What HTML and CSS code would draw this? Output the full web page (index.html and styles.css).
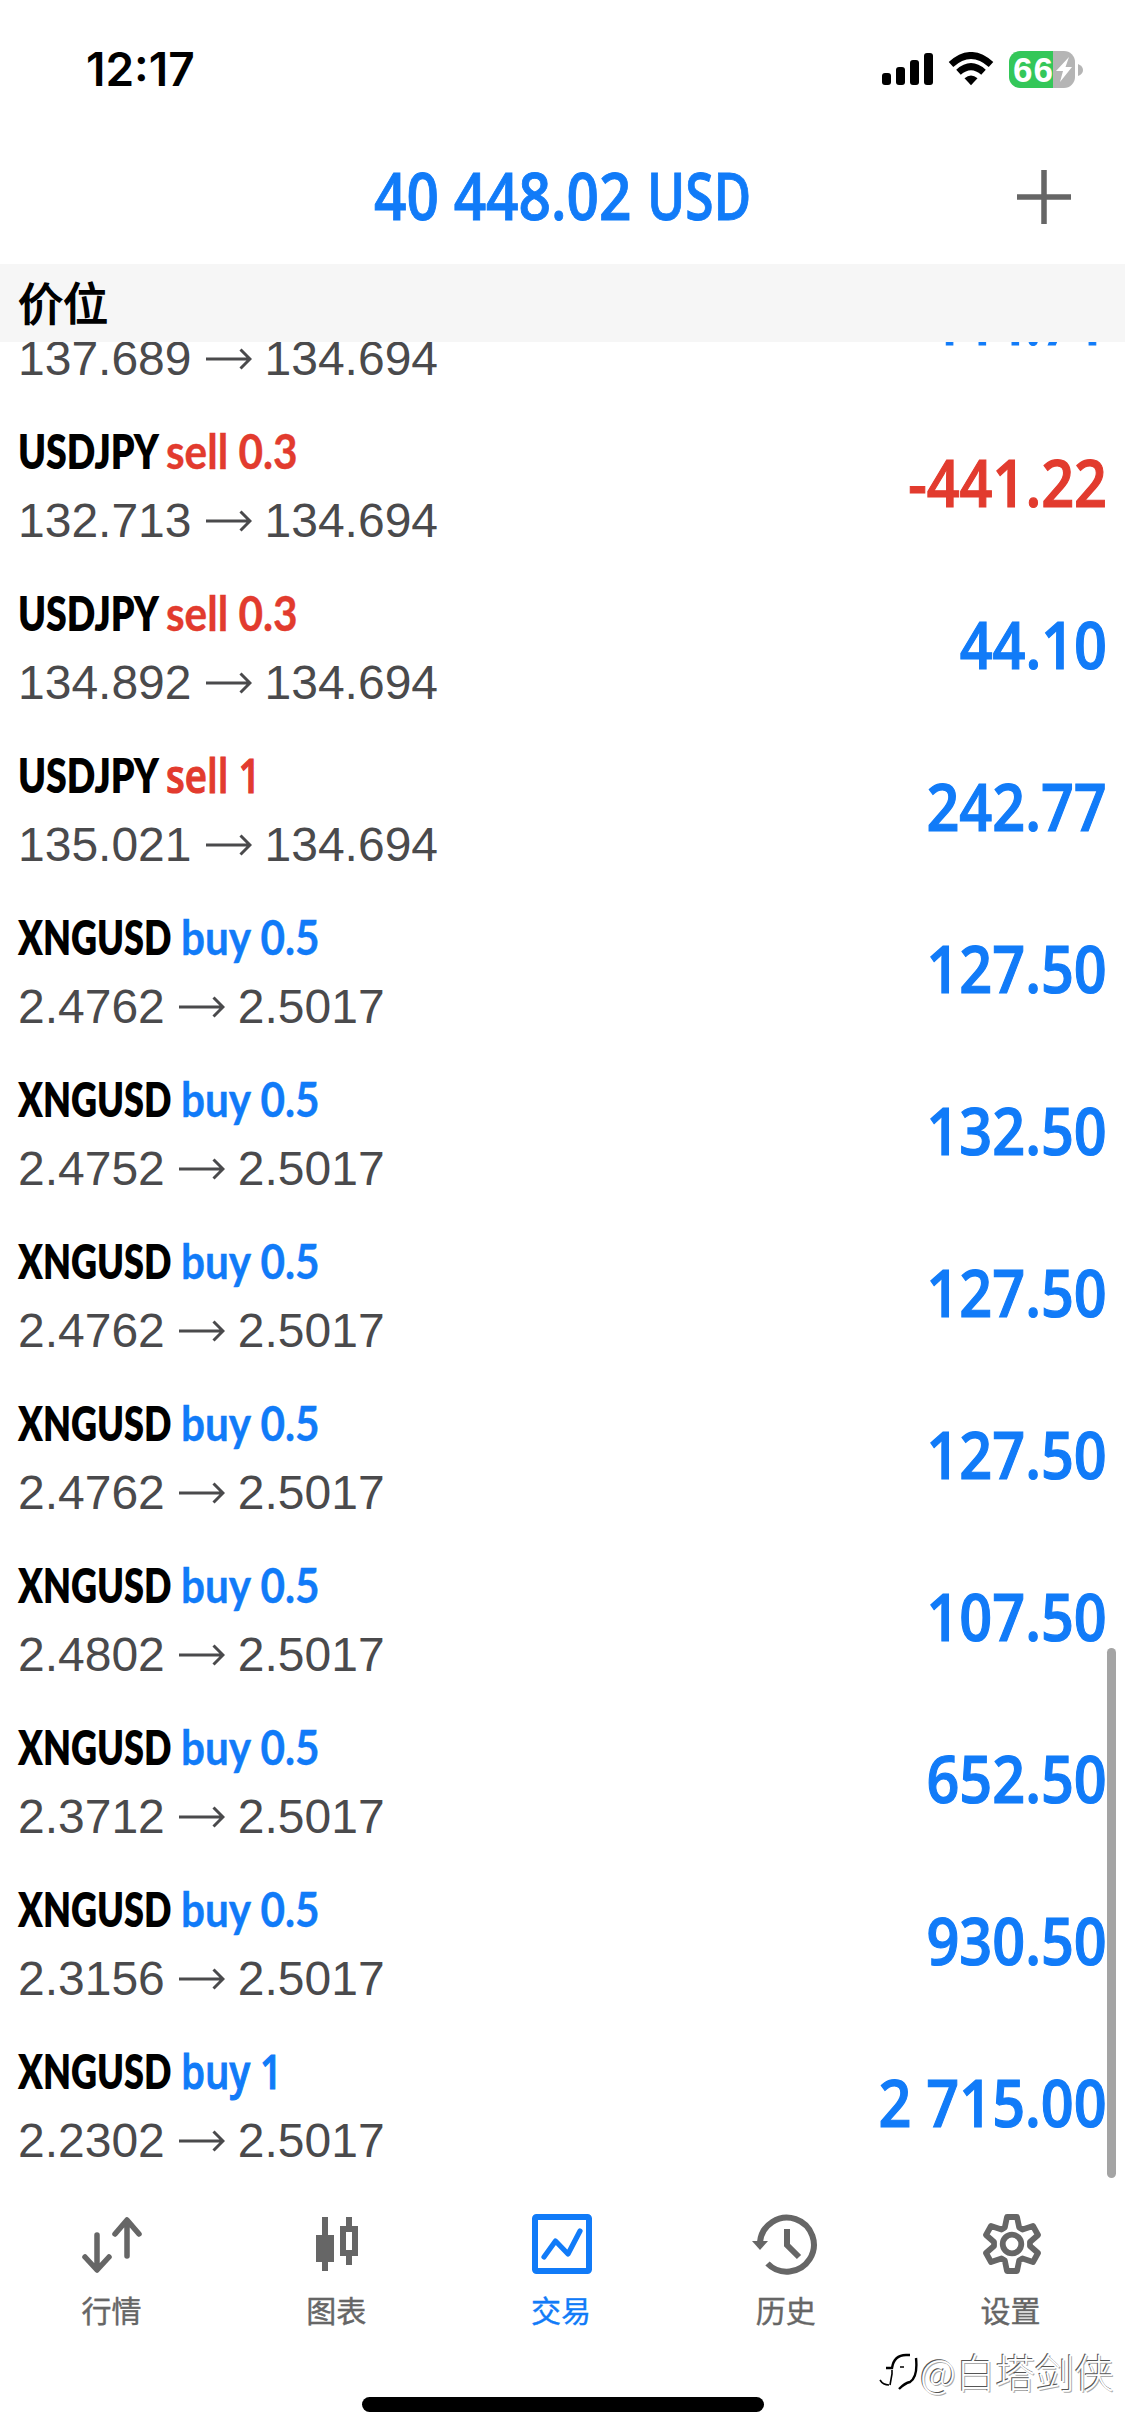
FILE: index.html
```html
<!DOCTYPE html>
<html lang="zh-CN">
<head>
<meta charset="utf-8">
<title>交易</title>
<link rel="stylesheet" href="styles.css">
</head>
<body>
<div class="screen">
  <header class="status">
    <span class="clock">12:17</span>
    <div class="indicators">
      <svg class="signal" width="51" height="34" viewBox="0 0 51 34"><rect x="0" y="21" width="9" height="12" rx="3"/><rect x="14" y="15" width="9" height="18" rx="3"/><rect x="28" y="8" width="9" height="25" rx="3"/><rect x="42" y="1" width="9" height="32" rx="3"/></svg>
      <svg class="wifi" width="46" height="34" viewBox="0 0 46 34" fill="none" stroke="#000" stroke-width="6.8"><path d="M3 12.500Q23-5.500 43 12.500"/><path d="M10.500 20.200Q23 9 35.500 20.200"/><path d="M16.500 26.300Q23 20.500 29.500 26.300L23 33.200Z" fill="#000" stroke="none"/></svg>
      <div class="battery"><span class="charge">66</span><svg width="18" height="27" viewBox="0 0 18 27"><path d="M14 1 1 15H8L5 26 17 11H10.500Z" fill="#fff"/></svg></div>
      <svg class="cap" width="5" height="12" viewBox="0 0 5 12"><path d="M0 0Q5 2 5 6T0 12Z" fill="#b5b5b5"/></svg>
    </div>
  </header>
  <div class="navbar">
    <h1 class="balance"><span class="sum">40 448.02</span><span class="currency">USD</span></h1>
    <svg class="add" width="56" height="56" viewBox="0 0 56 56"><path d="M28 1V55M1 28H55" stroke="#666" stroke-width="5.500"/></svg>
  </div>
  <h2 class="section">价位</h2>
  <main class="viewport">
    <ul class="positions">
      <li class="row"><div class="info"><p class="name"></p><p class="price">137.689<svg class="arrow" viewBox="0 0 46 22"><path d="M0 11H44M34.500 1.500 44 11 34.500 20.500"/></svg>134.694</p></div><span class="amount">444.71</span></li>
      <li class="row"><div class="info"><p class="name"><b>USDJPY</b><span class="side sell">sell 0.3</span></p><p class="price">132.713<svg class="arrow" viewBox="0 0 46 22"><path d="M0 11H44M34.500 1.500 44 11 34.500 20.500"/></svg>134.694</p></div><span class="amount loss">-441.22</span></li>
      <li class="row"><div class="info"><p class="name"><b>USDJPY</b><span class="side sell">sell 0.3</span></p><p class="price">134.892<svg class="arrow" viewBox="0 0 46 22"><path d="M0 11H44M34.500 1.500 44 11 34.500 20.500"/></svg>134.694</p></div><span class="amount">44.10</span></li>
      <li class="row"><div class="info"><p class="name"><b>USDJPY</b><span class="side sell whole">sell 1</span></p><p class="price">135.021<svg class="arrow" viewBox="0 0 46 22"><path d="M0 11H44M34.500 1.500 44 11 34.500 20.500"/></svg>134.694</p></div><span class="amount">242.77</span></li>
      <li class="row"><div class="info"><p class="name"><b class="gas">XNGUSD</b><span class="side">buy 0.5</span></p><p class="price">2.4762<svg class="arrow" viewBox="0 0 46 22"><path d="M0 11H44M34.500 1.500 44 11 34.500 20.500"/></svg>2.5017</p></div><span class="amount">127.50</span></li>
      <li class="row"><div class="info"><p class="name"><b class="gas">XNGUSD</b><span class="side">buy 0.5</span></p><p class="price">2.4752<svg class="arrow" viewBox="0 0 46 22"><path d="M0 11H44M34.500 1.500 44 11 34.500 20.500"/></svg>2.5017</p></div><span class="amount">132.50</span></li>
      <li class="row"><div class="info"><p class="name"><b class="gas">XNGUSD</b><span class="side">buy 0.5</span></p><p class="price">2.4762<svg class="arrow" viewBox="0 0 46 22"><path d="M0 11H44M34.500 1.500 44 11 34.500 20.500"/></svg>2.5017</p></div><span class="amount">127.50</span></li>
      <li class="row"><div class="info"><p class="name"><b class="gas">XNGUSD</b><span class="side">buy 0.5</span></p><p class="price">2.4762<svg class="arrow" viewBox="0 0 46 22"><path d="M0 11H44M34.500 1.500 44 11 34.500 20.500"/></svg>2.5017</p></div><span class="amount">127.50</span></li>
      <li class="row"><div class="info"><p class="name"><b class="gas">XNGUSD</b><span class="side">buy 0.5</span></p><p class="price">2.4802<svg class="arrow" viewBox="0 0 46 22"><path d="M0 11H44M34.500 1.500 44 11 34.500 20.500"/></svg>2.5017</p></div><span class="amount">107.50</span></li>
      <li class="row"><div class="info"><p class="name"><b class="gas">XNGUSD</b><span class="side">buy 0.5</span></p><p class="price">2.3712<svg class="arrow" viewBox="0 0 46 22"><path d="M0 11H44M34.500 1.500 44 11 34.500 20.500"/></svg>2.5017</p></div><span class="amount">652.50</span></li>
      <li class="row"><div class="info"><p class="name"><b class="gas">XNGUSD</b><span class="side">buy 0.5</span></p><p class="price">2.3156<svg class="arrow" viewBox="0 0 46 22"><path d="M0 11H44M34.500 1.500 44 11 34.500 20.500"/></svg>2.5017</p></div><span class="amount">930.50</span></li>
      <li class="row"><div class="info"><p class="name"><b class="gas">XNGUSD</b><span class="side whole">buy 1</span></p><p class="price">2.2302<svg class="arrow" viewBox="0 0 46 22"><path d="M0 11H44M34.500 1.500 44 11 34.500 20.500"/></svg>2.5017</p></div><span class="amount">2 715.00</span></li>
    </ul>
    <i class="thumb"></i>
  </main>
  <nav class="tabs">
    <a class="tab"><svg width="66" height="66" viewBox="0 0 66 66" fill="none" stroke="#666" stroke-width="5.500" stroke-linecap="round" stroke-linejoin="round"><path d="M18 24V58M6 46 18 59 30 46M48 45V10M36 23 48 9 60 23"/></svg><span>行情</span></a>
    <a class="tab"><svg width="66" height="66" viewBox="0 0 66 66" fill="#666"><path d="M18 6h6v18h6v27h-6v9h-6v-9h-6v-27h6zM42 6h6v9h6v30h-6v9h-6v-9h-6v-30h6zM42 21v18h6v-18z" fill-rule="evenodd"/></svg><span>图表</span></a>
    <a class="tab active"><svg width="66" height="66" viewBox="0 0 66 66" fill="none" stroke="#117bf8"><rect x="6" y="6" width="54" height="54" rx="1.500" stroke-width="6"/><path d="M15 46 26.500 30 39 43 51 20" stroke-width="5.200" stroke-linecap="round" stroke-linejoin="round"/></svg><span>交易</span></a>
    <a class="tab"><svg width="72" height="66" viewBox="0.500 0 72 66" fill="none" stroke="#666" stroke-width="6"><path d="M9.500 31A27 27 0 1 1 17 52.500M36.500 18V34L48.500 46"/><path d="M1.500 30H17.500L9.500 39Z" fill="#666" stroke="none"/></svg><span>历史</span></a>
    <a class="tab"><svg width="66" height="66" viewBox="0 0 66 66" fill="none" stroke="#666" stroke-width="5.800" stroke-linejoin="round"><circle cx="33" cy="33" r="9.300"/><path d="M28 6H38L40.200 16.500 43.500 18.500 54 15 59 24 51 31V35L59 42 54 51 43.500 47.500 40.200 49.500 38 60H28L25.800 49.500 22.500 47.500 12 51 7 42 15 35V31L7 24 12 15 22.500 18.500 25.800 16.500Z"/></svg><span>设置</span></a>
  </nav>
  <footer class="home"><i class="pill"></i></footer>
  <div class="watermark"><svg width="40" height="42" viewBox="0 0 40 42" fill="none" stroke="#000"><path d="M7 18H13Q15 5 27 5H31" stroke-width="2.400"/><path d="M37 8Q39 27 31 32 26 33 20 39" stroke-width="2.400"/><path d="M13 20V24L11 35M21 17H25M1 30Q4 35 10 35" stroke-width="1.600"/></svg><span>@白塔剑侠</span></div>
</div>
</body>
</html>
```
FILE: styles.css
```css
* { box-sizing: border-box; margin: 0; padding: 0; }
body { background: #fff; }

.screen {
  position: relative;
  width: 1125px;
  height: 2436px;
  overflow: hidden;
  display: flex;
  flex-direction: column;
  background: #fff;
  font-family: Lato, "Noto Sans CJK SC", sans-serif;
}

/* status bar */
.status {
  height: 140px;
  padding: 0 42px 0 86px;
  display: flex;
  justify-content: space-between;
}
.clock {
  margin-top: 39px;
  font: 600 46px/60px Inter, sans-serif;
}
.indicators { display: flex; margin-top: 51px; height: 37px; }
.signal { margin: 1px 15px 0 0; }
.wifi { margin: 1px 15px 0 0; }
.battery {
  width: 66px;
  height: 37px;
  border-radius: 11px;
  display: flex;
  align-items: center;
  background: linear-gradient(90deg, #34c759 44px, #b5b5b5 44px);
}
.charge {
  width: 46px;
  padding-left: 4px;
  font: 700 35px/37px "Liberation Sans", sans-serif;
  letter-spacing: 1px;
  color: #fff;
}
.cap { margin: 13px 0 0 3px; }

/* balance */
.navbar {
  height: 124px;
  display: grid;
  grid-template-columns: 109px 1fr 109px;
  align-items: start;
}
.balance {
  grid-column: 2;
  display: flex;
  margin-top: 14px;
  padding-left: 265px;
  font: 600 66px/80px "Open Sans", sans-serif;
  color: #117bf8;
  -webkit-text-stroke: .9px #117bf8;
  white-space: pre;
}
.sum { width: 273px; transform: scaleX(.86); transform-origin: 0 50%; }
.currency { transform: scaleX(.78); transform-origin: 0 50%; }
.add { margin: 29px 0 0; }

.section {
  height: 78px;
  padding-left: 18px;
  background: #f6f6f6;
  font: 400 45px/76px "Noto Sans CJK SC", sans-serif;
  -webkit-text-stroke: 1.5px #000;
}

/* positions */
.viewport { position: relative; height: 1843px; overflow: hidden; }
.positions { list-style: none; margin-top: -101px; }
.row {
  height: 162px;
  padding: 17px 18px 0;
  display: flex;
  justify-content: space-between;
}
.name {
  display: flex;
  height: 71px;
  font-size: 47px;
  line-height: 62px;
  white-space: pre;
}
.name b { width: 148px; font-weight: 800; transform: scaleX(.798); transform-origin: 0 50%; }
.name .gas { width: 163px; transform: scaleX(.768); }
.side {
  font-weight: 700;
  color: #117bf8;
  -webkit-text-stroke: .4px;
  transform: scaleX(.9);
  transform-origin: 0 50%;
}
.side.sell { color: #e23b2e; }
.side.whole {
  font-family: "Open Sans", sans-serif;
  font-weight: 600;
  -webkit-text-stroke: 1.1px;
  transform: scaleX(.82);
}
.price {
  display: flex;
  align-items: center;
  font: 48px/60px "Liberation Sans", sans-serif;
  color: #4a4a4c;
}
.arrow {
  width: 46px;
  height: 22px;
  margin: 0 13px 0 14px;
  fill: none;
  stroke: #4a4a4c;
  stroke-width: 3;
}
.amount {
  margin-top: 21px;
  font: 600 66px/80px "Open Sans", sans-serif;
  color: #117bf8;
  -webkit-text-stroke: 1.2px;
  white-space: pre;
  transform: scaleX(.872);
  transform-origin: 100% 50%;
}
.amount.loss { color: #e23b2e; }
.thumb {
  position: absolute;
  right: 9px;
  top: 1306px;
  width: 9px;
  height: 530px;
  border-radius: 5px;
  background: #a4a4a4;
}

/* tab bar */
.tabs {
  height: 180px;
  margin-right: 1px;
  padding-top: 26px;
  display: grid;
  grid-template-columns: repeat(5, 1fr);
}
.tab {
  display: flex;
  flex-direction: column;
  align-items: center;
  font: 400 30px/44px "Noto Sans CJK SC", sans-serif;
  color: #666;
  -webkit-text-stroke: .4px;
}
.tab span { margin: 10px 2px 0 0; }
.tab.active { color: #117bf8; }

.home { display: flex; justify-content: center; padding-top: 32px; }
.pill { width: 402px; height: 15px; border-radius: 8px; background: #000; }

.watermark {
  position: absolute;
  left: 879px;
  top: 2342px;
  display: flex;
  align-items: center;
  font: 300 39.500px/58px "Noto Sans CJK SC", sans-serif;
  color: #fff;
  text-shadow: -1px -1px 0 #555, 1px 1px 0 #aaa;
}
.watermark span { margin-left: 1px; }
```
